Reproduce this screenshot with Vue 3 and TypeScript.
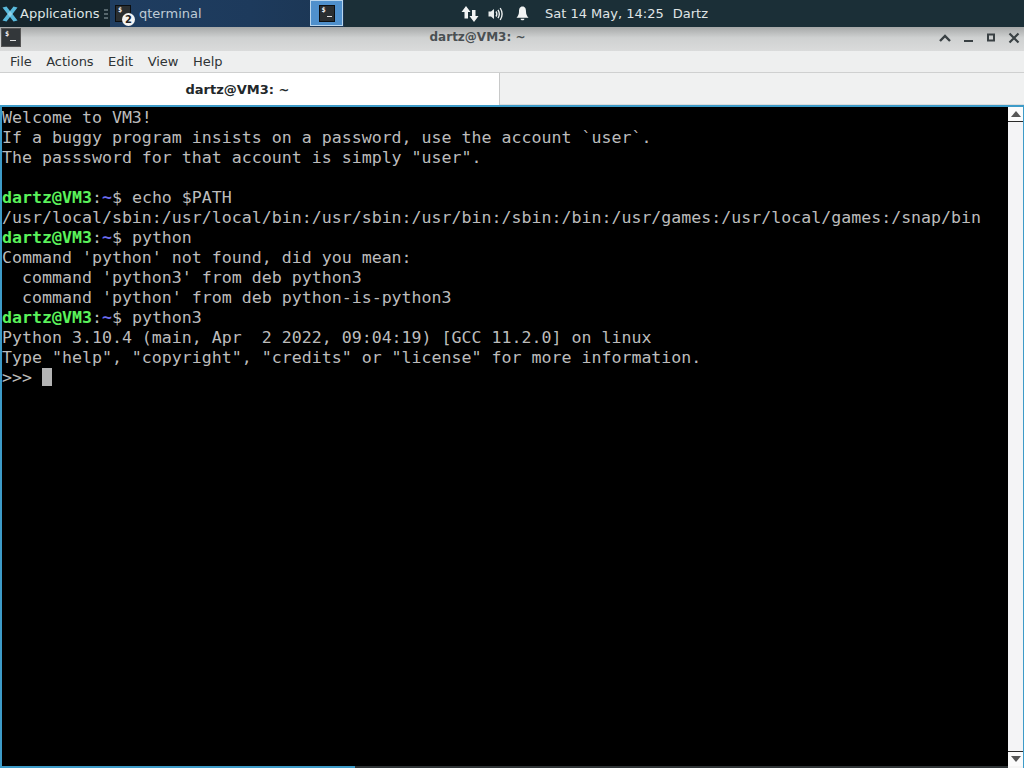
<script setup lang="ts">
interface Seg { t: string; c?: string }
const prompt = (cmd: string): Seg[] => [
  { t: 'dartz@VM3', c: 'user' },
  { t: ':' },
  { t: '~', c: 'path' },
  { t: '$ ' + cmd },
]
const lines: Seg[][] = [
  [{ t: 'Welcome to VM3!' }],
  [{ t: 'If a buggy program insists on a password, use the account `user`.' }],
  [{ t: 'The passsword for that account is simply "user".' }],
  [{ t: ' ' }],
  prompt('echo $PATH'),
  [{ t: '/usr/local/sbin:/usr/local/bin:/usr/sbin:/usr/bin:/sbin:/bin:/usr/games:/usr/local/games:/snap/bin' }],
  prompt('python'),
  [{ t: "Command 'python' not found, did you mean:" }],
  [{ t: "  command 'python3' from deb python3" }],
  [{ t: "  command 'python' from deb python-is-python3" }],
  prompt('python3'),
  [{ t: 'Python 3.10.4 (main, Apr  2 2022, 09:04:19) [GCC 11.2.0] on linux' }],
  [{ t: 'Type "help", "copyright", "credits" or "license" for more information.' }],
]
const menus = ['File', 'Actions', 'Edit', 'View', 'Help']
</script>

<template>
  <div class="screen">
    <header class="panel">
      <div class="apps">
        <svg class="xfce" width="16" height="16" viewBox="0 0 16 16">
          <path d="M0.5 1.5 L4.5 0.5 L8 5 L11.5 0.5 L15.5 1.5 L10.5 8 L15.5 14.5 L11.5 15.5 L8 11 L4.5 15.5 L0.5 14.5 L5.5 8 Z" fill="#58b9dc" />
          <path d="M5.5 8 L8 5 L10.5 8 L8 11 Z" fill="#8fd3ea" />
        </svg>
        <span class="apps-label">Applications</span>
        <span class="sep"><i></i><i></i><i></i></span>
      </div>
      <div class="tasks">
        <div class="task">
          <span class="term-icon small"><b>$</b><em></em></span>
          <span class="badge">2</span>
          <span class="task-label">qterminal</span>
        </div>
        <div class="desk">
          <span class="term-icon small"><b>$</b><em></em></span>
        </div>
      </div>
      <div class="tray">
        <svg class="ic-net" width="18" height="16" viewBox="0 0 18 16">
          <path d="M5 0 L9.5 6 H7 V12.5 H3.5 V6 H0.5 Z" fill="#f2f4f4" />
          <path d="M13 16 L8.5 10 H11 V4 H14.5 V10 H17.5 Z" fill="#f2f4f4" />
        </svg>
        <svg class="ic-vol" width="15" height="14" viewBox="0 0 15 14">
          <path d="M0.5 4.5 H3 L6 2 V12 L3 9.5 H0.5 Z" fill="#e8ecec" />
          <path d="M8 4.5 Q9.6 7 8 9.5 M10 2.8 Q12.6 7 10 11.2 M12.2 1 Q16 7 12.2 13" fill="none" stroke="#e8ecec" stroke-width="1.4" />
        </svg>
        <svg class="ic-bell" width="13" height="15" viewBox="0 0 13 15">
          <path d="M6.5 0.5 C9.3 0.5 10 3 10 5.5 C10 8.5 11 10 12.5 11.8 H0.5 C2 10 3 8.5 3 5.5 C3 3 3.7 0.5 6.5 0.5 Z" fill="#f2f4f4" />
          <path d="M4.6 12.7 H8.4 C8.4 14.8 4.6 14.8 4.6 12.7 Z" fill="#f2f4f4" />
        </svg>
        <span class="clock">Sat 14 May, 14:25</span>
        <span class="who">Dartz</span>
      </div>
    </header>

    <div class="titlebar">
      <span class="term-icon title-icon"><b>$</b><em></em></span>
      <span class="title">dartz@VM3: ~</span>
      <div class="win-btns">
        <svg width="12" height="10" viewBox="0 0 12 10"><path d="M1 8 L6 3 L11 8" fill="none" stroke="#3a4144" stroke-width="2.4" /></svg>
        <svg width="12" height="10" viewBox="0 0 12 10"><path d="M2 8 H11" fill="none" stroke="#3a4144" stroke-width="2" /></svg>
        <svg width="12" height="10" viewBox="0 0 12 10"><rect x="3" y="1.5" width="6" height="6" fill="none" stroke="#3a4144" stroke-width="2" /></svg>
        <svg width="12" height="12" viewBox="0 0 12 12"><path d="M1.5 1.5 L10.5 10.5 M10.5 1.5 L1.5 10.5" fill="none" stroke="#3a4144" stroke-width="2.2" /></svg>
      </div>
    </div>

    <nav class="menubar">
      <span v-for="m in menus" :key="m" class="menu">{{ m }}</span>
    </nav>

    <div class="tabbar">
      <div class="tab">dartz@VM3: ~</div>
    </div>

    <main class="term">
      <div class="output">
        <div v-for="(line, i) in lines" :key="i" class="line"><span v-for="(s, j) in line" :key="j" :class="s.c">{{ s.t }}</span></div>
        <div class="line">&gt;&gt;&gt; <span class="cursor"> </span></div>
      </div>
      <aside class="scrollbar">
        <div class="sb-btn">
          <svg width="10" height="6" viewBox="0 0 10 6"><path d="M0 6 L5 0 L10 6 Z" fill="#555" /></svg>
        </div>
        <div class="sb-track"></div>
        <div class="sb-btn down">
          <svg width="10" height="6" viewBox="0 0 10 6"><path d="M0 0 L5 6 L10 0 Z" fill="#555" /></svg>
        </div>
      </aside>
    </main>
  </div>
</template>

<style>
html, body { margin: 0; background: #000; overflow: hidden; }
</style>

<style scoped>
.screen {
  width: 1024px;
  height: 768px;
  display: flex;
  flex-direction: column;
  overflow: hidden;
  font-family: "DejaVu Sans", sans-serif;
  position: relative;
}
.panel {
  height: 27px;
  flex: none;
  display: flex;
  background: #1b2f37;
  color: #e4e8e8;
  font-size: 13px;
}
.apps {
  width: 110px;
  flex: none;
  display: flex;
  align-items: center;
  background: #15252c;
}
.xfce { margin-left: 2px; margin-right: 2px; flex: none; }
.apps-label { white-space: nowrap; color: #dfe5e6; }
.sep {
  display: flex;
  flex-direction: column;
  gap: 2px;
  margin-left: 5px;
}
.sep i { display: block; width: 4px; height: 2px; background: #56666c; }
.tasks {
  width: 234px;
  flex: none;
  display: flex;
  justify-content: space-between;
  background: linear-gradient(90deg, #1f3d60, #1d3a5c 60%, #1c3653);
}
.task {
  display: flex;
  align-items: center;
  padding-left: 5px;
  position: relative;
}
.task-label { margin-left: 8px; color: #bfcbd6; }
.badge {
  position: absolute;
  left: 12px;
  top: 13px;
  width: 13px;
  height: 13px;
  border-radius: 50%;
  background: #f4f4f4;
  color: #222;
  font-size: 10px;
  font-weight: 700;
  line-height: 13px;
  text-align: center;
}
.desk {
  width: 33px;
  height: 26px;
  box-sizing: border-box;
  border: 1px solid #b9d6ee;
  background: #4f90cc;
  display: flex;
  align-items: center;
  justify-content: center;
  margin-right: 1px;
}
.term-icon {
  display: block;
  position: relative;
  box-sizing: border-box;
  background: #2a2e30;
  border: 1px solid #0c0e10;
  color: #f0f0f0;
  flex: none;
}
.term-icon b {
  position: absolute;
  left: 2px;
  top: 0;
  font: 700 7px/9px "DejaVu Sans Mono", monospace;
}
.term-icon em {
  position: absolute;
  height: 1px;
  background: #e0e0e0;
}
.term-icon.small { width: 16px; height: 17px; }
.term-icon.small em { left: 7px; top: 10px; width: 5px; }
.title-icon { width: 20px; height: 19px; margin: 1px 0 0 1px; background: #33373a; border-color: #555; }
.title-icon em { left: 8px; top: 11px; width: 6px; }
.title-icon b { left: 3px; top: 1px; }
.tray {
  flex: 1;
  display: flex;
  align-items: center;
  padding-left: 117px;
  background: #1b2f37;
  color: #e0e5e6;
}
.ic-net { flex: none; }
.ic-vol { margin-left: 9px; flex: none; }
.ic-bell { margin-left: 13px; flex: none; }
.clock { margin-left: 16px; white-space: nowrap; }
.who { margin-left: 9px; }
.titlebar {
  height: 24px;
  flex: none;
  display: flex;
  align-items: flex-start;
  background: linear-gradient(180deg, #a6a8a8, #cfd1d1 45%, #dadbdb);
}
.title {
  flex: 1;
  padding-top: 3px;
  text-align: center;
  font-size: 12px;
  font-weight: 700;
  color: #4a5053;
}
.win-btns {
  width: 90px;
  box-sizing: border-box;
  padding-right: 4px;
  display: flex;
  justify-content: flex-end;
  gap: 11px;
  align-items: center;
  height: 21px;
}
.menubar {
  height: 22px;
  flex: none;
  box-sizing: border-box;
  display: flex;
  align-items: center;
  padding-left: 10px;
  gap: 14.4px;
  background: #eeefef;
  border-bottom: 1px solid #cfd0d0;
  color: #2e3436;
  font-size: 13px;
}
.tabbar {
  height: 32px;
  flex: none;
  box-sizing: border-box;
  display: flex;
  background: #f0f1f1;
  border-bottom: 1px solid #dcdddd;
}
.tab {
  width: 500px;
  height: 32px;
  box-sizing: border-box;
  background: #fff;
  border-right: 1px solid #c8c9c9;
  text-align: center;
  line-height: 33px;
  padding-right: 24px;
  font-size: 13px;
  font-weight: 700;
  color: #22272a;
}
.term {
  flex: 1;
  display: flex;
  background: #000;
  border: 2px solid #3d9bc8;
  border-right-width: 1px;
  border-bottom: none;
  position: relative;
}
.term::after {
  content: "";
  position: absolute;
  left: 353px;
  right: 15px;
  bottom: 0;
  height: 2px;
  background: #2f3436;
}
.term::before {
  content: "";
  position: absolute;
  left: -2px;
  width: 355px;
  bottom: 0;
  height: 2px;
  background: #3d9bc8;
}
.output {
  flex: 1;
  min-width: 0;
  padding-top: 1px;
  font-family: "DejaVu Sans Mono", monospace;
  font-size: 16.6px;
  line-height: 20px;
  color: #bcbcbc;
  white-space: pre;
}
.line { height: 20px; }
.user { color: #5bf35b; font-weight: 700; }
.path { color: #6c6cf0; font-weight: 700; }
.cursor {
  display: inline-block;
  width: 10px;
  height: 18px;
  vertical-align: top;
  background: #b4b4b4;
}
.scrollbar {
  width: 15px;
  flex: none;
  display: flex;
  flex-direction: column;
  background: #f5f5f5;
}
.sb-btn {
  height: 14px;
  flex: none;
  display: flex;
  align-items: center;
  justify-content: center;
  background: #fbfbfb;
  border-bottom: 1px solid #2a2a2a;
}
.sb-btn.down {
  border-bottom: none;
  border-top: 1px solid #2a2a2a;
  height: 14px;
  margin-bottom: 2px;
}
.sb-track { flex: 1; background: #f4f4f6; }
</style>
